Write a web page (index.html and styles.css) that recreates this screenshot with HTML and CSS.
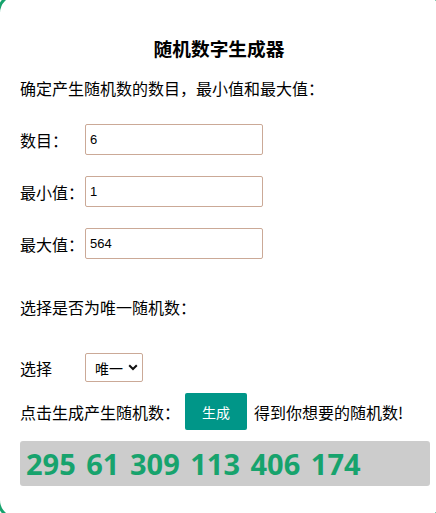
FILE: index.html
```html
<!DOCTYPE html>
<html lang="zh-CN">
<head>
<meta charset="utf-8">
<title>随机数字生成器</title>
<link rel="stylesheet" href="styles.css">
</head>
<body>
<div class="card">
  <h3 class="title">随机数字生成器</h3>
  <p class="intro">确定产生随机数的数目，最小值和最大值：</p>
  <div class="field field-first">
    <label class="label">数目：</label>
    <input class="num-input" type="text" value="6">
  </div>
  <div class="field">
    <label class="label">最小值：</label>
    <input class="num-input" type="text" value="1">
  </div>
  <div class="field">
    <label class="label">最大值：</label>
    <input class="num-input" type="text" value="564">
  </div>
  <p class="choose-text">选择是否为唯一随机数：</p>
  <div class="field select-row">
    <label class="label">选择</label>
    <span class="select-wrap">
      <select class="choice"><option>唯一</option><option>不唯一</option></select>
      <svg class="chevron" width="10" height="7" viewBox="0 0 10 7"><path d="M1.2 1.2 L5 5 L8.8 1.2" fill="none" stroke="#111" stroke-width="2"/></svg>
    </span>
  </div>
  <div class="action-row">
    <span>点击生成产生随机数：</span>
    <button class="gen-btn" type="button">生成</button>
    <span>得到你想要的随机数!</span>
  </div>
  <div class="result">295 61 309 113 406 174</div>
</div>
</body>
</html>
```
FILE: styles.css
```css
html, body {
  margin: 0;
  padding: 0;
  background: #fff;
  overflow: hidden;
}
body {
  width: 436px;
  height: 513px;
  font-family: "Noto Sans CJK SC", "Noto Sans", sans-serif;
  font-size: 16px;
  color: #000;
}
.card {
  box-sizing: border-box;
  width: 447px;
  height: 527px;
  margin: -7px 0 0 -3px;
  border: 3px solid #17a36d;
  border-radius: 20px;
  padding: 34px 0 0 20px;
  display: flex;
  flex-direction: column;
}
.title {
  margin: 0 23px 0 0;
  height: 36px;
  line-height: 36px;
  font-size: 18.7px;
  font-weight: bold;
  text-align: center;
}
.intro {
  margin: 10px 0 0;
  height: 24px;
  line-height: 24px;
}
.field {
  display: flex;
  align-items: center;
  margin-top: 21px;
}
.field-first {
  margin-top: 24px;
}
.label {
  width: 65px;
  flex: none;
}
.num-input {
  box-sizing: border-box;
  width: 178px;
  height: 31px;
  border: 1px solid #cba997;
  border-radius: 2px;
  padding: 0 4px;
  font-family: "Liberation Sans", Arial, sans-serif;
  font-size: 13px;
  color: #000;
  outline: none;
}
.choose-text {
  margin: 36px 0 0;
  height: 24px;
  line-height: 24px;
}
.select-row {
  margin-top: 34px;
}
.select-wrap {
  position: relative;
  display: inline-block;
}
.choice {
  box-sizing: border-box;
  width: 58px;
  height: 29px;
  border: 1px solid #cba997;
  border-radius: 2px;
  padding: 0 0 0 9px;
  background: #fff;
  font-family: "Noto Sans CJK SC", sans-serif;
  font-size: 14px;
  color: #000;
  appearance: none;
  -webkit-appearance: none;
  outline: none;
}
.chevron {
  position: absolute;
  left: 43px;
  top: 11px;
  pointer-events: none;
}
.action-row {
  display: flex;
  align-items: center;
  margin-top: 11px;
  height: 37px;
}
.gen-btn {
  width: 62px;
  height: 37px;
  margin: 0 7px 0 5px;
  border: none;
  border-radius: 2px;
  background: #009688;
  color: #fff;
  font-family: "Noto Sans CJK SC", sans-serif;
  font-size: 14px;
  padding: 0;
}
.result {
  box-sizing: border-box;
  width: 410px;
  height: 45px;
  margin-top: 11px;
  background: #cccccc;
  border-radius: 3px;
  padding-left: 6px;
  font-family: "Open Sans", sans-serif;
  font-weight: bold;
  font-size: 29px;
  word-spacing: 3px;
  line-height: 45px;
  color: #17a36d;
}
```
